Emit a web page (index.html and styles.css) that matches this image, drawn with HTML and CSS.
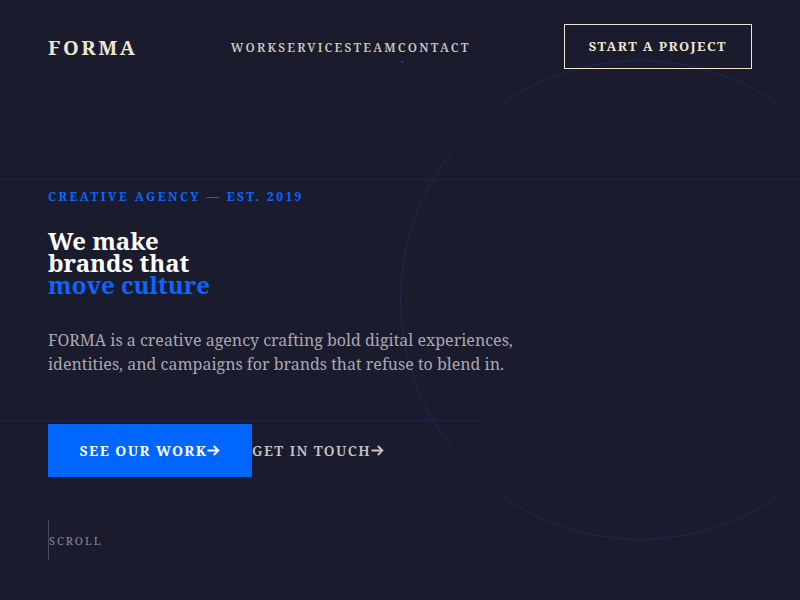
FILE: index.html
```html
<!DOCTYPE html>
<html lang="en">
<head>
<meta charset="utf-8">
<title>FORMA</title>
<link rel="stylesheet" href="styles.css">
</head>
<body>
<div class="page">
  <div class="deco-circle"></div>
  <div class="deco-line deco-line-top"></div>
  <div class="deco-line deco-line-bottom"></div>
  <header class="header">
    <div class="logo">FORMA</div>
    <nav class="nav">
      <a href="#">WORK</a><a href="#">SERVICES</a><a href="#">TEAM</a><a href="#" class="active">CONTACT</a>
    </nav>
    <a href="#" class="btn-outline">START A PROJECT</a>
  </header>
  <main class="hero">
    <div class="eyebrow">CREATIVE AGENCY — EST. 2019</div>
    <h1 class="title">We make<br>brands that<br><span class="accent">move culture</span></h1>
    <p class="lead">FORMA is a creative agency crafting bold digital experiences, identities, and campaigns for brands that refuse to blend in.</p>
    <div class="actions">
      <a href="#" class="btn-primary">SEE OUR WORK<svg class="arrow" width="13" height="11" viewBox="0 0 13 11"><path d="M0.5 5.5H11.5M6.8 1L11.3 5.5L6.8 10" fill="none" stroke="currentColor" stroke-width="1.9"/></svg></a>
      <a href="#" class="btn-link">GET IN TOUCH<svg class="arrow" width="13" height="11" viewBox="0 0 13 11"><path d="M0.5 5.5H11.5M6.8 1L11.3 5.5L6.8 10" fill="none" stroke="currentColor" stroke-width="1.9"/></svg></a>
    </div>
    <div class="scroll">SCROLL</div>
  </main>
</div>
</body>
</html>
```
FILE: styles.css
```css
* { box-sizing: border-box; }
html, body { margin: 0; padding: 0; }
body {
  background: #1b1b2e;
  font-family: "Noto Serif", "DejaVu Serif", serif;
  color: #ece6d0;
}
a { text-decoration: none; color: inherit; }
.page {
  position: relative;
  width: 800px;
  height: 600px;
  overflow: hidden;
}
.deco-circle {
  position: absolute;
  left: 400px;
  top: 60px;
  width: 480px;
  height: 480px;
  border: 1px solid rgba(30, 50, 120, 0.55);
  border-radius: 50%;
}
.deco-line {
  position: absolute;
  left: 0;
  height: 1px;
  background: rgba(30, 50, 120, 0.45);
}
.deco-line-top { top: 179px; width: 800px; }
.deco-line-bottom { top: 420px; width: 480px; }
.header {
  position: relative;
  display: flex;
  justify-content: space-between;
  align-items: center;
  padding: 24px 48px;
}
.logo {
  font-size: 20px;
  line-height: 24px;
  font-weight: 700;
  letter-spacing: 2.6px;
  color: #ece6d0;
  margin-top: 2px;
}
.nav {
  display: flex;
  font-size: 12px;
  line-height: 16px;
  font-weight: 600;
  letter-spacing: 2.2px;
  color: #ccc8bc;
  margin-top: 2px;
}
.nav .active { position: relative; }
.nav .active::after {
  content: "";
  position: absolute;
  left: 3px;
  top: 21px;
  width: 2px;
  height: 2px;
  background: #1e3a8a;
}
.btn-outline {
  border: 1px solid #ece6d0;
  padding: 13px 24px 14px;
  font-size: 13px;
  font-weight: 700;
  letter-spacing: 1.4px;
  line-height: 16px;
  color: #ece6d0;
}
.hero {
  position: relative;
  padding: 96px 48px 0;
}
.eyebrow {
  font-size: 12px;
  line-height: 16px;
  font-weight: 700;
  letter-spacing: 2.45px;
  color: #0a66ff;
}
.title {
  margin: 25px 0 0;
  font-size: 24px;
  line-height: 22px;
  font-weight: 700;
  color: #ffffff;
}
.accent { color: #0a66ff; }
.lead {
  margin: 32px 0 0;
  width: 480px;
  font-size: 16px;
  line-height: 24px;
  color: #a9a7b0;
}
.actions {
  margin-top: 48px;
  display: flex;
  align-items: center;
}
.btn-primary {
  display: flex;
  align-items: center;
  justify-content: center;
  width: 204px;
  height: 53px;
  background: #0066ff;
  color: #ffffff;
  font-size: 14px;
  font-weight: 700;
  letter-spacing: 1.4px;
}
.btn-link {
  display: flex;
  align-items: center;
  font-size: 14px;
  font-weight: 600;
  letter-spacing: 1.4px;
  color: #c9c5c4;
}
.arrow {
  display: block;
  margin-top: -1px;
}
.scroll {
  margin-top: 43px;
  height: 40px;
  border-left: 1px solid #4a4a5e;
  display: flex;
  align-items: center;
  font-size: 11px;
  letter-spacing: 2px;
  color: #8a8994;
}
```
